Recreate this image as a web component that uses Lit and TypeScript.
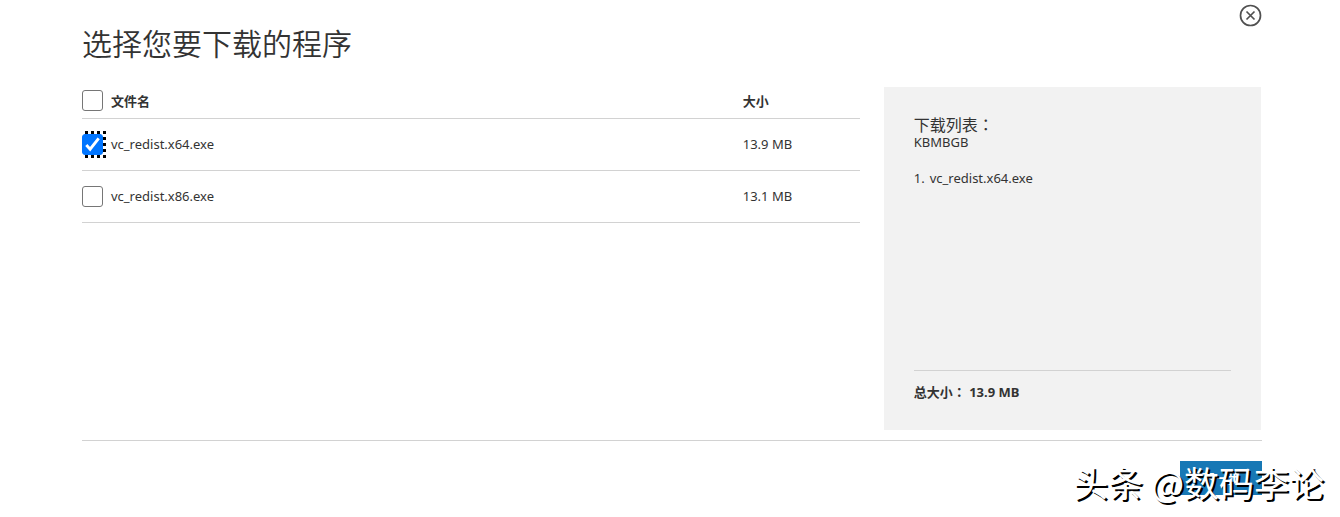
import { LitElement, html, css } from "lit";
import { customElement, state } from "lit/decorators.js";

interface FileItem {
  name: string;
  size: number;
}

const FILES: FileItem[] = [
  { name: "vc_redist.x64.exe", size: 13.9 },
  { name: "vc_redist.x86.exe", size: 13.1 },
];

@customElement("app-root")
export class AppRoot extends LitElement {
  @state() private selected = new Set<string>(["vc_redist.x64.exe"]);

  static styles = css`
    :host {
      display: block;
      position: relative;
      box-sizing: border-box;
      min-height: 100vh;
      padding: 4px 78px 20px 82px;
      background: #fff;
      color: #333;
      font: 13px/18px "Noto Sans", "Noto Sans CJK SC", sans-serif;
      overflow: hidden;
    }
    * {
      box-sizing: border-box;
    }
    .top {
      display: flex;
      justify-content: flex-end;
    }
    .close {
      width: 23px;
      height: 23px;
      padding: 0;
      border: 0;
      background: none;
    }
    .close svg {
      display: block;
    }
    h1 {
      margin: 0;
      padding-bottom: 30px;
      font-size: 30px;
      line-height: 30px;
      font-weight: 350;
      font-family: "Noto Sans CJK SC", sans-serif;
    }
    .columns {
      display: flex;
      align-items: flex-start;
      gap: 24px;
      padding: 0 1px 10px 0;
      border-bottom: 1px solid #d2d2d2;
    }
    table {
      flex: 1;
      border-collapse: collapse;
      table-layout: fixed;
    }
    th,
    td {
      padding: 0;
      text-align: left;
      border-bottom: 1px solid #d2d2d2;
      height: 52px;
    }
    th {
      height: 31px;
      padding-bottom: 3px;
      font-weight: 700;
    }
    .size {
      width: 117px;
    }
    .pick {
      display: flex;
      align-items: center;
      gap: 5px;
    }
    .box {
      display: flex;
      flex: none;
      align-items: center;
      width: 24px;
      height: 27px;
    }
    .box:has(.focused:checked) {
      background:
        repeating-linear-gradient(90deg, transparent 0 3px, #000 3px 6px) top / 100% 3px no-repeat,
        repeating-linear-gradient(90deg, transparent 0 3px, #000 3px 6px) bottom / 100% 3px no-repeat,
        repeating-linear-gradient(#000 0 3px, transparent 3px 6px) right / 3px 100% no-repeat;
    }
    th .box {
      height: 21px;
    }
    .check {
      appearance: none;
      flex: none;
      width: 21px;
      height: 21px;
      margin: 0;
      border: 1px solid #767676;
      border-radius: 3px;
      background: #fff;
    }
    .check:checked {
      border-color: #0075ff;
      background: #0075ff
        url("data:image/svg+xml,%3Csvg xmlns='http://www.w3.org/2000/svg' viewBox='0 0 20 20'%3E%3Cpath d='M3.5 10.5l4 4.5 9-11.500' fill='none' stroke='white' stroke-width='3'/%3E%3C/svg%3E")
        center / 19px 19px no-repeat;
    }
    .summary {
      display: flex;
      flex-direction: column;
      flex: 0 0 32%;
      min-height: 343px;
      padding: 29px 30px;
      background: #f2f2f2;
    }
    h2 {
      margin: 0;
      font-size: 16px;
      line-height: 16px;
      font-weight: 400;
    }
    .colon {
      font-family: "Noto Sans CJK TC", sans-serif;
    }
    .unit {
      margin: 0 0 18px;
    }
    .list {
      flex: 1;
      margin: 0;
      padding: 0;
      list-style: none;
      counter-reset: file;
    }
    .list li {
      display: flex;
      counter-increment: file;
    }
    .list li::before {
      content: counter(file) ".";
      width: 16px;
    }
    .total {
      margin: 0;
      padding-top: 12px;
      border-top: 1px solid #d2d2d2;
      font-weight: 700;
    }
    .actions {
      display: flex;
      justify-content: flex-end;
      padding-top: 20px;
    }
    .next {
      width: 82px;
      height: 34px;
      padding: 0;
      border: 0;
      background: #1778b5;
      color: #fff;
      font: inherit;
      font-weight: 700;
    }
    .mark {
      position: absolute;
      right: 16px;
      bottom: 14px;
      font-size: 35px;
      line-height: 42px;
      font-family: "Noto Sans CJK SC", sans-serif;
      color: #fff;
      text-shadow: 2px 2px 0 #000;
      pointer-events: none;
    }
  `;

  private toggle(name: string) {
    const next = new Set(this.selected);
    if (!next.delete(name)) next.add(name);
    this.selected = next;
  }

  private toggleAll(e: Event) {
    const on = (e.target as HTMLInputElement).checked;
    this.selected = new Set(on ? FILES.map((f) => f.name) : []);
  }

  render() {
    const chosen = FILES.filter((f) => this.selected.has(f.name));
    const total = chosen.reduce((sum, f) => sum + f.size, 0);
    return html`
      <div class="top">
        <button class="close" aria-label="关闭">
          <svg width="23" height="23" viewBox="0 0 23 23" fill="none" stroke="#505050">
            <circle cx="11.500" cy="11.500" r="10" stroke-width="1.700" />
            <path d="M7.500 7.500l8 8M15.500 7.500l-8 8" stroke-width="1.700" />
          </svg>
        </button>
      </div>
      <h1>选择您要下载的程序</h1>
      <div class="columns">
        <table>
          <thead>
            <tr>
              <th>
                <label class="pick">
                  <span class="box"
                    ><input
                      class="check"
                      type="checkbox"
                      .checked=${chosen.length === FILES.length}
                      @change=${this.toggleAll}
                  /></span>
                  文件名
                </label>
              </th>
              <th class="size">大小</th>
            </tr>
          </thead>
          <tbody>
            ${FILES.map(
              (f) => html`<tr>
                <td>
                  <label class="pick">
                    <span class="box"
                      ><input
                        class="check focused"
                        type="checkbox"
                        .checked=${this.selected.has(f.name)}
                        @change=${() => this.toggle(f.name)}
                    /></span>
                    ${f.name}
                  </label>
                </td>
                <td>${f.size.toFixed(1)} MB</td>
              </tr>`
            )}
          </tbody>
        </table>
        <section class="summary">
          <h2>下载列表<span class="colon">：</span></h2>
          <p class="unit">KBMBGB</p>
          <ol class="list">
            ${chosen.map((f) => html`<li>${f.name}</li>`)}
          </ol>
          <p class="total">
            总大小<span class="colon">：</span> ${total.toFixed(1)} MB
          </p>
        </section>
      </div>
      <div class="actions"><button class="next">下一步</button></div>
      <div class="mark">头条 @数码李论</div>
    `;
  }
}
